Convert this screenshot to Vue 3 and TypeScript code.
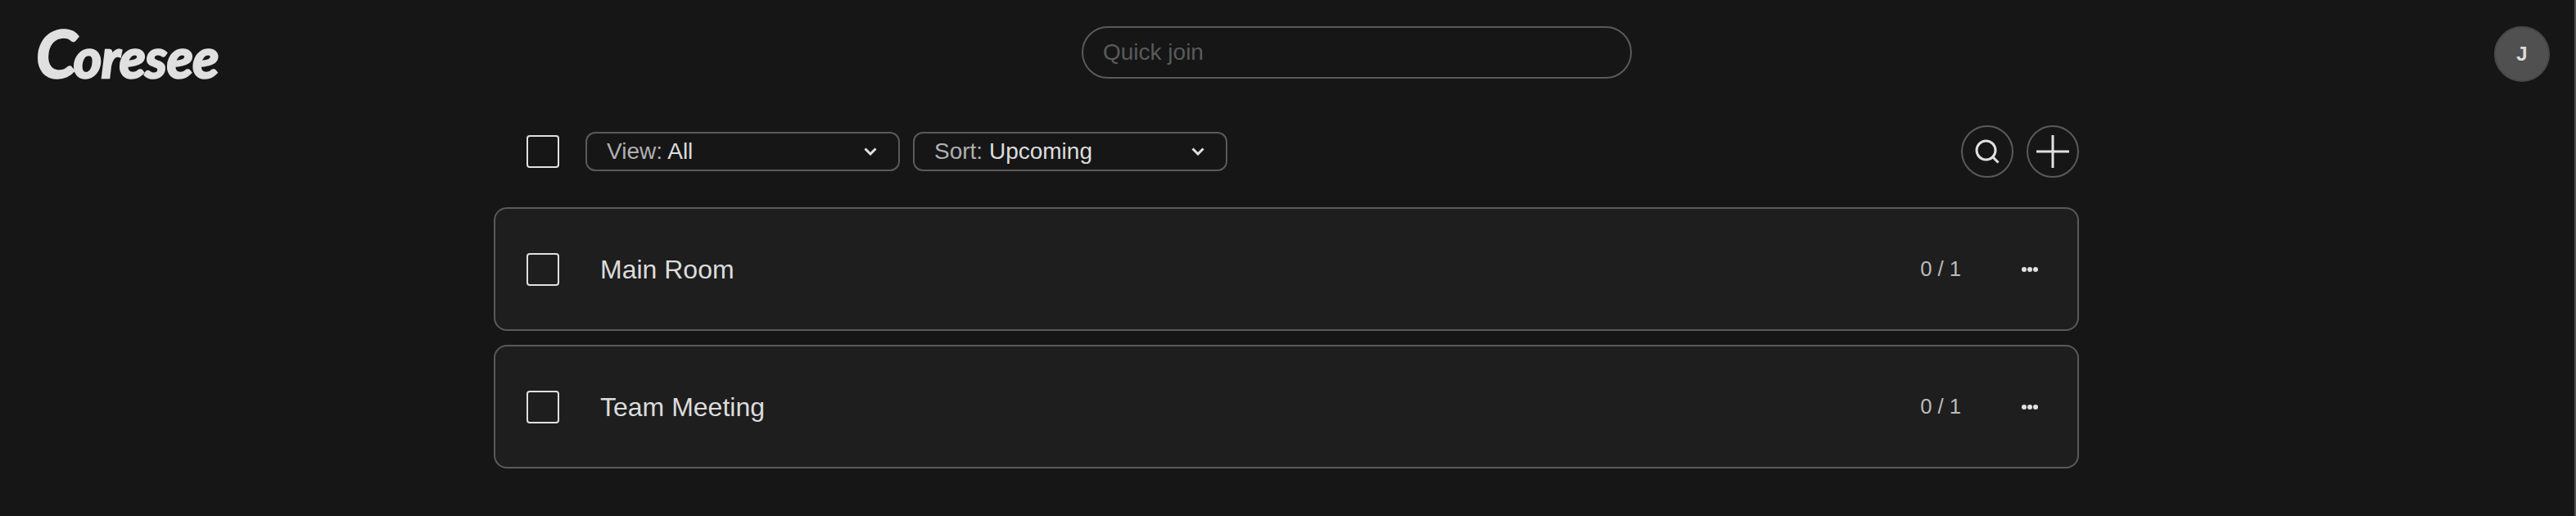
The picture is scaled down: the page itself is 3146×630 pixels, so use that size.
<script setup lang="ts">
const rooms = [
  { name: 'Main Room', count: '0 / 1' },
  { name: 'Team Meeting', count: '0 / 1' },
]
const filters = [
  { label: 'View:', value: 'All' },
  { label: 'Sort:', value: 'Upcoming' },
]
</script>

<template>
  <div class="page">
    <header class="header">
      <div class="logo"><span class="logoCap">C</span>oresee</div>
      <div class="quickJoin">Quick join</div>
      <div class="avatar">J</div>
    </header>

    <main class="content">
      <div class="toolbar">
        <span class="checkbox"></span>
        <div v-for="filter in filters" :key="filter.label" class="select">
          <span class="selectText"><span class="selectLabel">{{ filter.label }}</span> {{ filter.value }}</span>
          <svg class="chevron" width="16" height="10" viewBox="0 0 16 10">
            <path d="M1.5 1.5 L8 8 L14.5 1.5" fill="none" stroke="#e0e0e0" stroke-width="3" />
          </svg>
        </div>
        <div class="actions">
          <button class="roundButton">
            <svg width="36" height="36" viewBox="0 0 36 36">
              <circle cx="16.5" cy="16.5" r="11.5" fill="none" stroke="#e0e0e0" stroke-width="3" />
              <path d="M25 25 L31.5 31.5" fill="none" stroke="#e0e0e0" stroke-width="3" />
            </svg>
          </button>
          <button class="roundButton">
            <svg width="42" height="42" viewBox="0 0 42 42">
              <path d="M21 1 V41 M1 21 H41" fill="none" stroke="#e0e0e0" stroke-width="3" />
            </svg>
          </button>
        </div>
      </div>

      <div v-for="room in rooms" :key="room.name" class="room">
        <span class="checkbox"></span>
        <span class="roomName">{{ room.name }}</span>
        <span class="roomCount">{{ room.count }}</span>
        <svg class="more" width="20" height="8" viewBox="0 0 20 8">
          <circle cx="3" cy="4" r="3" fill="#e0e0e0" />
          <circle cx="10" cy="4" r="3" fill="#e0e0e0" />
          <circle cx="17" cy="4" r="3" fill="#e0e0e0" />
        </svg>
      </div>
    </main>
    <div class="edge"></div>
  </div>
</template>

<style>
html,
body {
  margin: 0;
  background: #161616;
}
</style>

<style scoped>
.page {
  position: relative;
  height: 630px;
  overflow: hidden;
  background: #161616;
  font-family: 'Liberation Sans', Arial, sans-serif;
  color: #dcdcdc;
}

.edge {
  position: absolute;
  top: 0;
  right: 0;
  bottom: 0;
  width: 2px;
  background: #505050;
}

.header {
  display: flex;
  align-items: flex-start;
  height: 152px;
  padding: 32px 32px 0 44px;
  box-sizing: border-box;
}

.logo {
  width: 1277px;
  height: 64px;
  font-family: Lato, sans-serif;
  font-style: italic;
  font-weight: 700;
  font-size: 66px;
  line-height: 64px;
  letter-spacing: -0.5px;
  color: #e0e0e0;
  -webkit-text-stroke: 2.5px #e0e0e0;
}

.logoCap {
  font-size: 80px;
  letter-spacing: -4px;
}

.quickJoin {
  width: 672px;
  height: 64px;
  padding-left: 24px;
  box-sizing: border-box;
  border: 2px solid #5a5a5a;
  border-radius: 32px;
  font-size: 28px;
  line-height: 60px;
  color: #5a5a5a;
}

.avatar {
  width: 68px;
  height: 68px;
  margin-left: auto;
  border-radius: 50%;
  box-sizing: border-box;
  border: 2px solid #484848;
  background: #505050;
  font-size: 24px;
  font-weight: 700;
  line-height: 64px;
  text-align: center;
}

.content {
  width: 1936px;
  margin-left: 603px;
  display: flex;
  flex-direction: column;
  gap: 17px;
}

.toolbar {
  display: flex;
  align-items: center;
  height: 84px;
  padding: 0 0 18px 40px;
  box-sizing: border-box;
  gap: 16px;
}

.checkbox {
  display: block;
  flex: none;
  width: 40px;
  height: 40px;
  box-sizing: border-box;
  border: 2px solid #e0e0e0;
  border-radius: 4px;
}

.toolbar .checkbox {
  margin-right: 16px;
}

.select {
  display: flex;
  align-items: center;
  justify-content: space-between;
  width: 384px;
  height: 48px;
  padding: 0 26px 0 24px;
  box-sizing: border-box;
  border: 2px solid #5a5a5a;
  border-radius: 12px;
  font-size: 28px;
}

.selectLabel {
  color: #b0b0b0;
}

.actions {
  display: flex;
  gap: 16px;
  margin-left: auto;
}

.roundButton {
  display: flex;
  align-items: center;
  justify-content: center;
  width: 64px;
  height: 64px;
  padding: 0;
  box-sizing: border-box;
  border: 2px solid #5a5a5a;
  border-radius: 50%;
  background: none;
}

.room {
  display: flex;
  align-items: center;
  height: 151px;
  padding: 0 48px 0 38px;
  box-sizing: border-box;
  border: 2px solid #5a5a5a;
  border-radius: 16px;
  background: #1e1e1e;
}

.roomName {
  margin-left: 50px;
  margin-top: 2px;
  font-size: 32px;
}

.roomCount {
  margin-left: auto;
  font-size: 25.6px;
  color: #bcbcbc;
}

.more {
  margin-left: 74px;
}
</style>
